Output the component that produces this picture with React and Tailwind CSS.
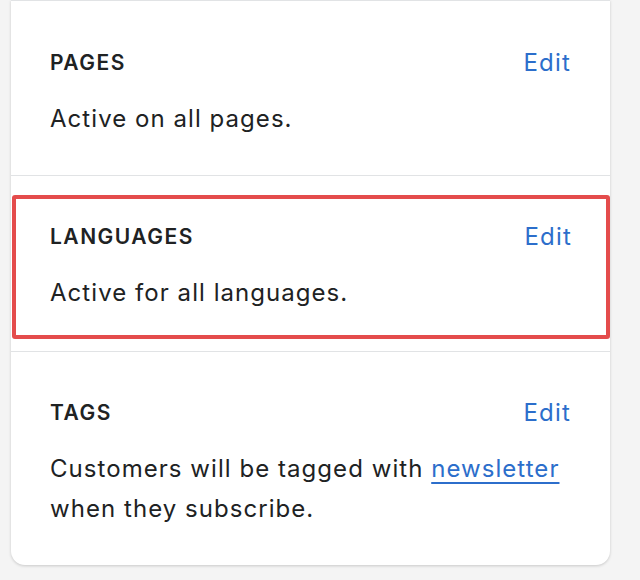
const Row = ({ title, children }) => (
  <div>
    <div className="flex items-center justify-between">
      <h3 className="text-[21px] leading-[24px] font-semibold tracking-[1.5px] text-[#202223]">{title}</h3>
      <a href="#" className="text-[24px] leading-[24px] tracking-[1.2px] text-[#2c6ecb]">Edit</a>
    </div>
    <div className="mt-[24px] text-[24px] leading-[40px] tracking-[1.05px] text-[#202223]">{children}</div>
  </div>
);

export default function App() {
  return (
    <div className="min-h-[580px] bg-[#f4f4f4] pl-[11px] pr-[30px]" style={{ fontFamily: "Inter, 'Noto Sans', sans-serif" }}>
      <div className="w-[599px] bg-white border-t border-[#e1e3e5] rounded-b-[14px] shadow-[0_1px_3px_rgba(0,0,0,0.18)]">
        <section className="px-[39px] pt-[50px] pb-[36px] border-b border-[#e1e3e5]">
          <Row title="PAGES">Active on all pages.</Row>
        </section>

        <section className="pt-[19px] pb-[12px] pl-px border-b border-[#e1e3e5]">
          <div className="border-[4px] border-[#e44c4c] rounded-[3px] px-[34px] pt-[26px] pb-[22px]">
            <Row title="LANGUAGES">Active for all languages.</Row>
          </div>
        </section>

        <section className="px-[39px] pt-[49px] pb-[36px]">
          <Row title="TAGS">
            Customers will be tagged with{" "}
            <a href="#" className="text-[#2c6ecb] underline decoration-2 underline-offset-[5px]">newsletter</a>
            <br />
            when they subscribe.
          </Row>
        </section>
      </div>
    </div>
  );
}
